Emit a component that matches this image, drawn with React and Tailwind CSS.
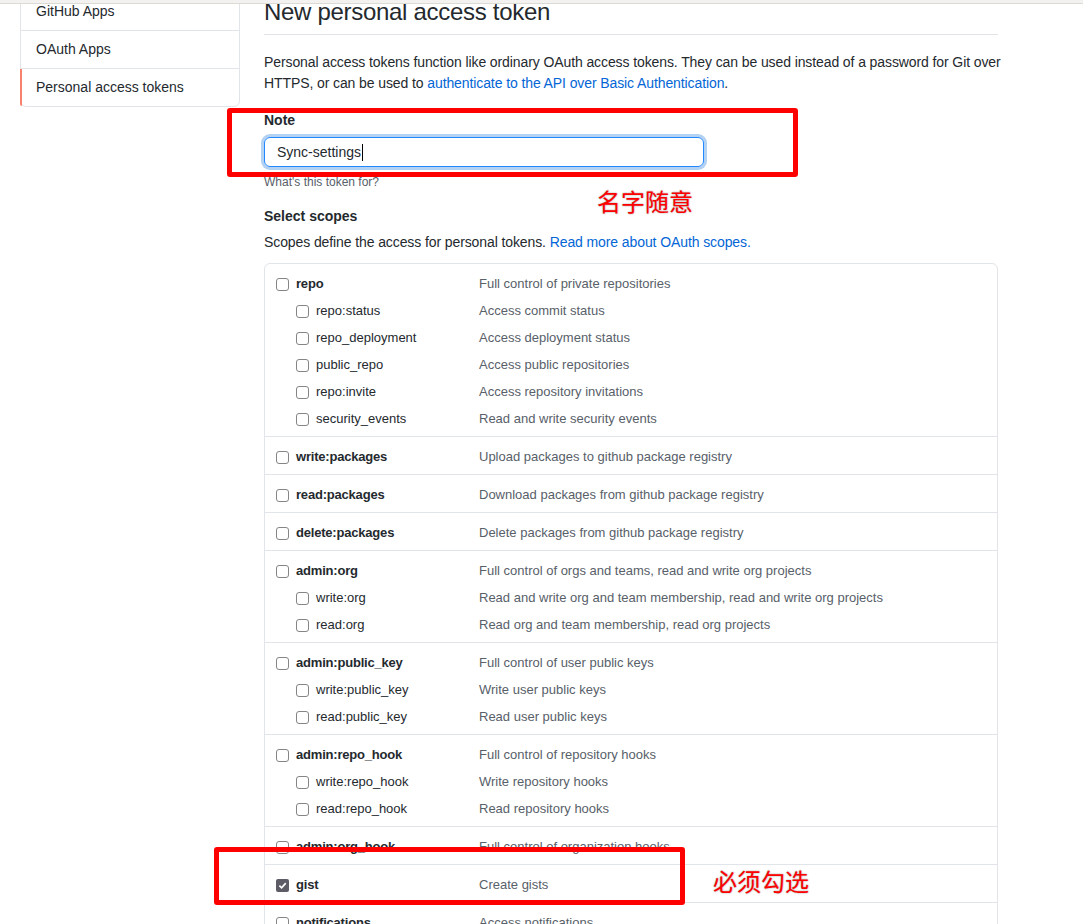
import React from "react";

const groups = [
    [
        ["repo", "Full control of private repositories", true],
        ["repo:status", "Access commit status"],
        ["repo_deployment", "Access deployment status"],
        ["public_repo", "Access public repositories"],
        ["repo:invite", "Access repository invitations"],
        ["security_events", "Read and write security events"],
    ],
    [["write:packages", "Upload packages to github package registry", true]],
    [["read:packages", "Download packages from github package registry", true]],
    [["delete:packages", "Delete packages from github package registry", true]],
    [
        ["admin:org", "Full control of orgs and teams, read and write org projects", true],
        ["write:org", "Read and write org and team membership, read and write org projects"],
        ["read:org", "Read org and team membership, read org projects"],
    ],
    [
        ["admin:public_key", "Full control of user public keys", true],
        ["write:public_key", "Write user public keys"],
        ["read:public_key", "Read user public keys"],
    ],
    [
        ["admin:repo_hook", "Full control of repository hooks", true],
        ["write:repo_hook", "Write repository hooks"],
        ["read:repo_hook", "Read repository hooks"],
    ],
    [["admin:org_hook", "Full control of organization hooks", true]],
    [["gist", "Create gists", true, true]],
    [["notifications", "Access notifications", true]],
];

function Checkbox({ checked }) {
    if (checked) {
        return (
            <span className="w-[13px] h-[13px] rounded-[2px] bg-[#5d5b66] flex items-center justify-center shrink-0">
                <svg width="9" height="9" viewBox="0 0 10 10">
                    <path d="M1.5 5.2 L4 7.6 L8.6 2.4" stroke="#fff" strokeWidth="1.8" fill="none" />
                </svg>
            </span>
        );
    }
    return <span className="w-[13px] h-[13px] rounded-[3px] border border-[#858585] bg-white shrink-0" />;
}

function ScopeRow({ name, desc, top, checked }) {
    return (
        <div className="flex items-start h-[27px] text-[13px] leading-[20px]">
            <div className={`w-[214px] h-[20px] flex items-center gap-[7px] ${top ? "pl-[11px]" : "pl-[31px]"}`}>
                <Checkbox checked={checked} />
                <span className={top ? "font-bold text-[#24292e] tracking-[-0.2px]" : "text-[#24292e]"}>{name}</span>
            </div>
            <div className="text-[#586069]">{desc}</div>
        </div>
    );
}

const sideItems = ["GitHub Apps", "OAuth Apps", "Personal access tokens"];

export default function App() {
    return (
        <div className="relative h-[924px] overflow-hidden bg-white text-[#24292e] font-['Liberation_Sans',Arial,sans-serif]">
            <div className="relative z-10 h-[4px] bg-[#f3f2f0] border-b border-[#dcdad5]" />

            <div className="flex pl-[20px] gap-[24px]">
                <nav className="w-[220px] -mt-[12px] self-start border border-[#e1e4e8] rounded-b-[6px] bg-white">
                    {sideItems.map((item, i) => (
                        <div
                            key={item}
                            className={`relative h-[37px] flex items-center pl-[15px] text-[14px] ${
                                i < sideItems.length - 1 ? "border-b border-[#e1e4e8] box-content" : ""
                            }`}
                        >
                            {i === 2 && <span className="absolute -left-px top-0 bottom-0 w-[2px] bg-[#f9826c] rounded-bl-[6px]" />}
                            {item}
                        </div>
                    ))}
                </nav>

                <main className="w-[734px] -mt-[10px]">
                    <h1 className="text-[24px] leading-[36px] font-normal tracking-[-0.3px] pb-[4px] border-b border-[#e1e4e8]">
                        New personal access token
                    </h1>
                    <p className="mt-[17px] text-[14px] leading-[21px] tracking-[-0.1px] whitespace-nowrap">
                        Personal access tokens function like ordinary OAuth access tokens. They can be used instead of a password for Git over
                        <br />
                        HTTPS, or can be used to{" "}
                        <span className="text-[#0366d6]">authenticate to the API over Basic Authentication</span>.
                    </p>

                    <div className="mt-[16px]">
                        <div className="text-[14px] leading-[20px] font-bold">Note</div>
                        <div className="mt-[7px] w-[440px] h-[30px] flex items-center pl-[12px] border border-[#2188ff] rounded-[6px] shadow-[0_0_0_3px_rgba(3,102,214,0.3)] text-[14px]">
                            Sync-settings
                            <span className="w-px h-[17px] bg-black ml-px" />
                        </div>
                        <div className="mt-[6px] text-[12px] leading-[18px] text-[#586069]">What's this token for?</div>
                    </div>

                    <div className="mt-[15px] text-[14px] leading-[20px] font-bold">Select scopes</div>
                    <p className="mt-[6px] text-[14px] leading-[21px] tracking-[-0.1px]">
                        Scopes define the access for personal tokens.{" "}
                        <span className="text-[#0366d6]">Read more about OAuth scopes.</span>
                    </p>

                    <div className="mt-[10px] border border-[#e1e4e8] rounded-[6px] divide-y divide-[#e1e4e8]">
                        {groups.map((g, gi) => (
                            <div key={gi} className="pt-[10px]">
                                {g.map(([name, desc, top, checked]) => (
                                    <ScopeRow key={name} name={name} desc={desc} top={top} checked={checked} />
                                ))}
                            </div>
                        ))}
                    </div>
                </main>
            </div>

            {/* annotations */}
            <div className="absolute left-[227px] top-[108px] w-[571px] h-[69px] border-[5px] border-[#ff0000] rounded-[3px]" />
            <div className="absolute left-[597px] top-[186px] text-[24px] leading-[30px] text-[#ff0000] font-['Noto_Sans_CJK_SC',sans-serif] [text-shadow:0_0_2px_#b0b0b0,0_0_1px_#b0b0b0]">
                名字随意
            </div>
            <div className="absolute left-[214px] top-[847px] w-[471px] h-[58px] border-[5px] border-[#ff0000] rounded-[3px]" />
            <div className="absolute left-[713px] top-[866px] text-[24px] leading-[30px] text-[#ff0000] font-['Noto_Sans_CJK_SC',sans-serif] [text-shadow:0_0_2px_#b0b0b0,0_0_1px_#b0b0b0]">
                必须勾选
            </div>
        </div>
    );
}
